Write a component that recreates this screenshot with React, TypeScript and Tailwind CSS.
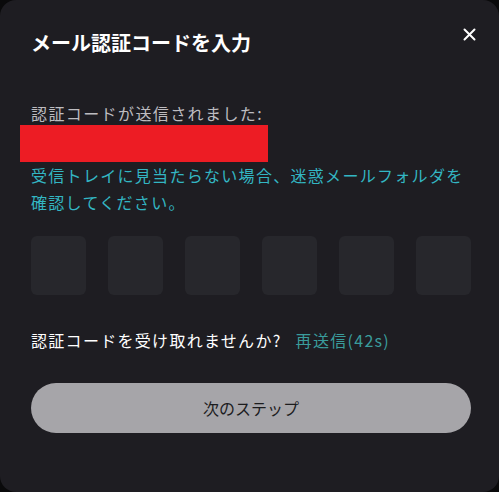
import React from "react";

const font = { fontFamily: '"Noto Sans CJK JP", "Noto Sans", sans-serif' };

const OtpBox: React.FC = () => (
  <div className="w-[55px] h-[59px] rounded-[6px] bg-[#27272c]" />
);

export default function App() {
  const boxes = [0, 1, 2, 3, 4, 5];
  return (
    <div className="w-[499px] h-[492px] bg-[#0a0a0b]" style={font}>
      <div className="relative w-full h-full rounded-[16px] bg-[#1e1d22] px-[31px] pt-[29px]">
        <button className="absolute top-[26px] right-[22px] w-[16px] h-[16px] flex items-center justify-center">
          <svg width="13" height="13" viewBox="0 0 13 13" fill="none">
            <path d="M1.5 1.5L11.5 11.5M11.5 1.5L1.5 11.5" stroke="#ffffff" strokeWidth="2" strokeLinecap="round" />
          </svg>
        </button>

        <h2 className="text-[20px] leading-[28px] font-bold text-white">メール認証コードを入力</h2>

        <p className="mt-[44px] text-[16px] leading-[24px] tracking-[1.4px] text-[#bdbcc0]">認証コードが送信されました:</p>
        <div className="-ml-[11px] w-[248px] h-[37px] bg-[#ed1c24]" />
        <p className="text-[16px] leading-[27px] tracking-[1.3px] text-[#33b6c3] w-[445px]">
          受信トレイに見当たらない場合、迷惑メールフォルダを確認してください。
        </p>

        <div className="mt-[20px] flex justify-between w-[440px]">
          {boxes.map((b) => (
            <OtpBox key={b} />
          ))}
        </div>

        <div className="mt-[33px] flex items-center text-[16px] leading-[24px] tracking-[1.3px]">
          <span className="text-white">認証コードを受け取れませんか?</span>
          <span className="ml-[14px] text-[#3a9c9c]">再送信(42s)</span>
        </div>

        <button className="mt-[31px] w-[440px] h-[50px] rounded-full bg-[#a6a5a9] text-[16px] text-[#1c1c1e] flex items-center justify-center">
          次のステップ
        </button>
      </div>
    </div>
  );
}
